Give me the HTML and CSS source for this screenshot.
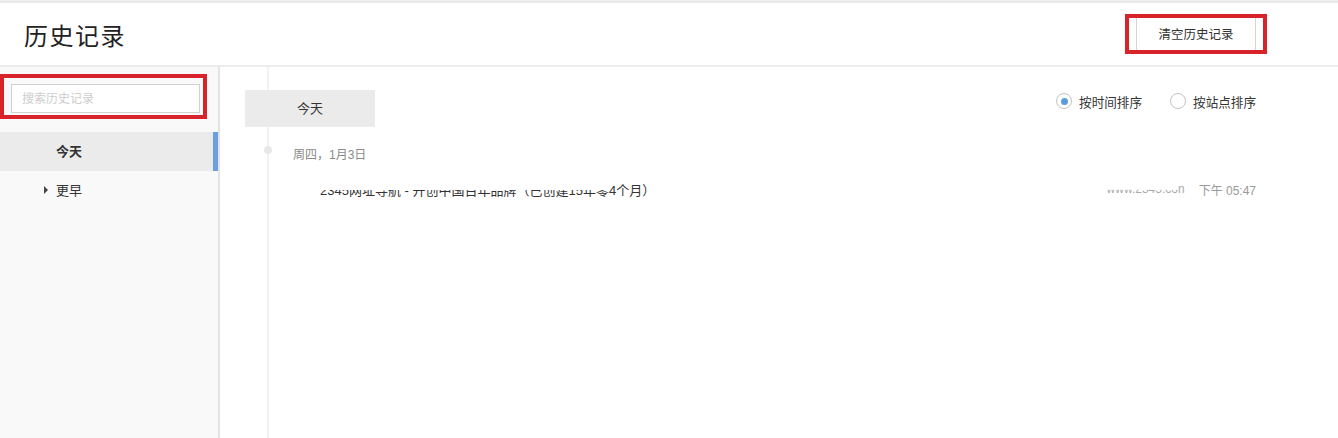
FILE: index.html
```html
<!DOCTYPE html>
<html lang="zh-CN">

<head>
  <meta charset="UTF-8">
  <title>历史记录</title>
  <link rel="stylesheet" href="styles.css">
</head>

<body>
  <header class="top">
    <h1>历史记录</h1>
    <div class="mark mark-btn">
      <button class="clear">清空历史记录</button>
    </div>
  </header>
  <div class="wrap">
    <aside class="side">
      <div class="mark mark-search">
        <input class="search" type="text" placeholder="搜索历史记录">
      </div>
      <ul class="nav">
        <li class="active">今天</li>
        <li class="more"><span class="arrow"></span>更早</li>
      </ul>
    </aside>
    <main class="main">
      <div class="bar">
        <div class="tab">今天</div>
        <div class="sort">
          <label class="opt"><span class="radio on"></span>按时间排序</label>
          <label class="opt"><span class="radio"></span>按站点排序</label>
        </div>
      </div>
      <!-- 时间线 -->
      <div class="day">
        <span class="dot"></span>
        <span class="date">周四，1月3日</span>
      </div>
      <div class="item">
        <span class="title"><span class="cut">2345网址导航 - 开创中国百年品牌（已创建15年零</span>4个月）</span>
        <span class="url"><span class="cut">www.2345.co</span>n</span>
        <span class="time">下午 05:47</span>
      </div>
    </main>
  </div>
</body>

</html>
```

FILE: styles.css
```css
* {
  box-sizing: border-box;
}

html,
body {
  height: 100%;
}

body {
  margin: 0;
  padding: 0;
  border-top: 3px solid #ebebeb;
  font-family: "Liberation Sans", "Noto Sans CJK SC", sans-serif;
  font-size: 12px;
  color: #333;
  background: #fff;
  display: flex;
  flex-direction: column;
}

.top {
  height: 64px;
  display: flex;
  align-items: center;
  justify-content: space-between;
  padding: 0 71px 0 24px;
  border-bottom: 2px solid #ececec;
}

.top h1 {
  margin: 0;
  font-size: 24px;
  font-weight: normal;
  color: #222;
  letter-spacing: 1.5px;
}

.mark {
  border: 4px solid #d9232b;
}

.mark-btn {
  width: 142px;
  height: 40px;
  padding: 0 7px;
  margin-top: -1px;
}

.clear {
  display: block;
  width: 100%;
  height: 100%;
  border: 0;
  border-left: 1px solid #d4d4d4;
  border-right: 1px solid #d4d4d4;
  background: #fff;
  font-family: inherit;
  font-size: 12.5px;
  color: #333;
  padding: 0;
}

.wrap {
  flex: 1;
  display: flex;
}

.side {
  width: 220px;
  background: #f9f9f9;
  border-right: 2px solid #e3e3e3;
}

.mark-search {
  width: 207px;
  height: 45px;
  margin-top: 7px;
  padding: 6px 3px 2px 7px;
}

.search {
  display: block;
  width: 189px;
  height: 29px;
  border: 1px solid #d0d0d0;
  background: #fff;
  padding: 0 10px;
  font-family: inherit;
  font-size: 12px;
  outline: none;
}

.search::placeholder {
  color: #cdcdcd;
}

.nav {
  list-style: none;
  margin: 13px 0 0;
  padding: 0;
}

.nav li {
  height: 39px;
  line-height: 39px;
  padding-left: 56px;
  font-size: 13px;
  color: #333;
}

.nav .active {
  background: #ebebeb;
  font-weight: bold;
  border-right: 5px solid #6c9fe0;
}

.nav .more {
  position: relative;
}

.arrow {
  position: absolute;
  left: 44px;
  top: 15px;
  border-left: 4px solid #444;
  border-top: 4px solid transparent;
  border-bottom: 4px solid transparent;
}

.main {
  flex: 1;
  position: relative;
  padding: 23px 82px 0 25px;
}

/* 时间线竖线 */
.main::before {
  content: "";
  position: absolute;
  left: 47px;
  top: 0;
  bottom: 0;
  width: 2px;
  background: #f2f2f2;
}

.bar {
  position: relative;
  display: flex;
  justify-content: space-between;
  align-items: flex-start;
}

.tab {
  width: 130px;
  height: 37px;
  line-height: 37px;
  text-align: center;
  background: #ebebeb;
  font-size: 13px;
  color: #333;
}

.sort {
  display: flex;
  gap: 28px;
  margin-top: 2px;
}

.opt {
  display: flex;
  align-items: center;
  gap: 7px;
  height: 18px;
  font-size: 12.6px;
  color: #333;
}

.radio {
  width: 16px;
  height: 16px;
  border: 1px solid #c3c3c3;
  border-radius: 50%;
  background: #fff;
  display: flex;
  align-items: center;
  justify-content: center;
}

.radio.on::after {
  content: "";
  width: 7px;
  height: 7px;
  border-radius: 50%;
  background: #5d9ae0;
}

.day {
  position: relative;
  display: flex;
  align-items: center;
  height: 20px;
  margin-top: 16px;
}

.dot {
  width: 8px;
  height: 8px;
  margin-left: 19px;
  margin-top: -7px;
  border-radius: 50%;
  background: #e8e8e8;
}

.date {
  margin-left: 21px;
  color: #8a8a8a;
  font-size: 12px;
}

.item {
  position: relative;
  display: flex;
  align-items: center;
  height: 32px;
  margin-top: 10px;
  padding-left: 75px;
  font-size: 13px;
}

.title {
  flex: 1;
  color: #333;
}

.cut {
  display: inline-block;
  clip-path: inset(55% 0 0 0);
}

.url {
  color: #aaa;
  font-size: 12px;
  margin-right: 14px;
}

.time {
  color: #999;
  font-size: 12px;
}
```
